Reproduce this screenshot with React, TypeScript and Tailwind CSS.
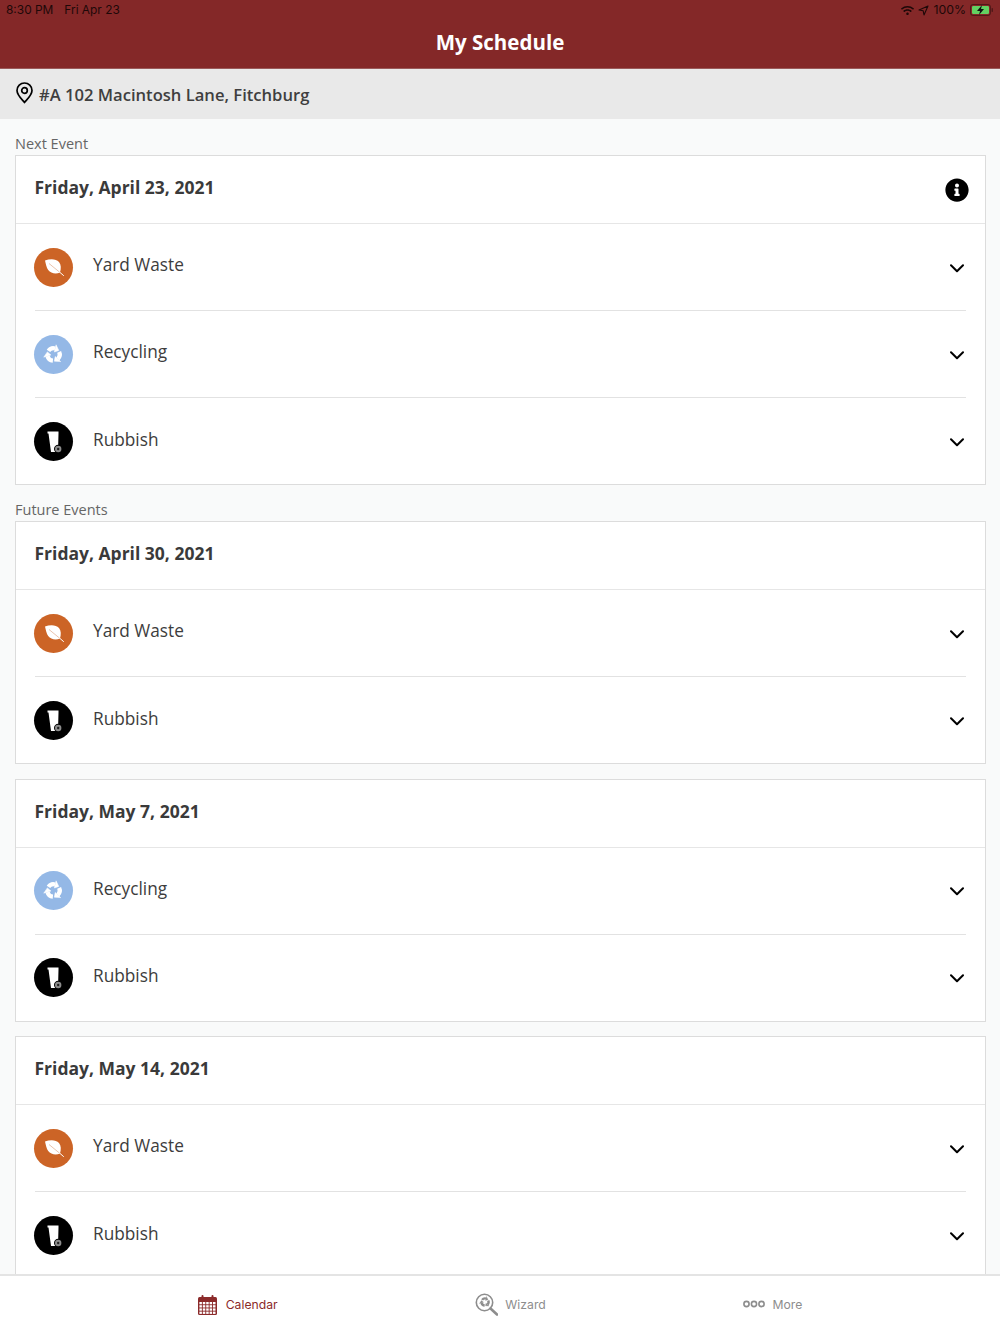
import React from "react";
import { FaInfoCircle, FaWifi } from "react-icons/fa";

const Chevron = () => (
  <svg width="14" height="9" viewBox="0 0 14 9" fill="none" className="shrink-0">
    <path d="M1 1.2L7 7.2L13 1.2" stroke="#000" strokeWidth="2" strokeLinecap="round" strokeLinejoin="round" />
  </svg>
);

const YardIcon = () => (
  <div className="w-[39px] h-[39px] rounded-full bg-[#cc6426] flex items-center justify-center shrink-0">
    <svg width="24" height="24" viewBox="0 0 24 24">
      <path d="M3 5.5C8 3.5 14 3.5 17 7C19.2 9.8 19.2 13.5 18 17.5C13.5 19.5 8.8 18.2 6.2 15C4.4 12.6 3.8 8.8 3 5.5Z" fill="#fff" />
      <path d="M7 8.5L18 17.5" stroke="#e3b498" strokeWidth="0.8" />
      <path d="M17.5 17L21.5 20.5" stroke="#fff" strokeWidth="1" strokeLinecap="round" />
    </svg>
  </div>
);

const RecycleGlyph = ({ color, size }: { color: string; size: number }) => (
  <svg width={size} height={size} viewBox="-11 -11 22 22" fill="none">
    {[0, 120, 240].map((a) => (
      <g key={a} transform={`rotate(${a})`}>
        <path d="M-5.3 -3.8A6.5 6.5 0 0 1 1.7 -6.3" stroke={color} strokeWidth="4.4" />
        <path d="M2.7 -10.2L0.9 -2.6L5.6 -4.2Z" fill={color} stroke={color} strokeWidth="0.5" strokeLinejoin="round" />
      </g>
    ))}
  </svg>
);

const RecycleIcon = () => (
  <div className="w-[39px] h-[39px] rounded-full bg-[#94b8e6] flex items-center justify-center shrink-0">
    <RecycleGlyph color="#fff" size={21} />
  </div>
);

const BinIcon = () => (
  <div className="w-[39px] h-[39px] rounded-full bg-black flex items-center justify-center shrink-0">
    <svg width="39" height="39" viewBox="0 0 39 39">
      <path d="M13.5 9.5H24.5V11.5L24 30H17L14.5 11.5L13.5 11.5Z" fill="#fff" />
      <circle cx="24.2" cy="27" r="4.2" fill="#000" />
      <circle cx="24.2" cy="27" r="3.2" fill="#8c8c8c" />
      <circle cx="24.2" cy="27" r="1.2" fill="#222" />
    </svg>
  </div>
);

const kinds: Record<string, { label: string; Icon: React.FC }> = {
  yard: { label: "Yard Waste", Icon: YardIcon },
  recycle: { label: "Recycling", Icon: RecycleIcon },
  rubbish: { label: "Rubbish", Icon: BinIcon },
};

function Row({ kind }: { kind: string }) {
  const { label, Icon } = kinds[kind];
  return (
    <div className="group h-[87px] last:h-[86px] mx-[19px] flex items-center border-b border-[#e2e2e2] last:border-b-0">
      <div className="-ml-[1px]">
        <Icon />
      </div>
      <span className="ml-[20px] flex-1 text-[17.25px] leading-[24px] text-[#3d3d3d] mb-[3.5px] group-last:mb-[2.5px]">{label}</span>
      <span className="w-[14px] mr-[2px] mt-[2px] flex justify-center">
        <Chevron />
      </span>
    </div>
  );
}

function Card({ date, items, info }: { date: string; items: string[]; info?: boolean }) {
  return (
    <div className="bg-white border border-[#dcdcdc]">
      <div className="h-[68px] border-b border-[#e6e6e6] pl-[18.5px] pr-[16px] flex items-center justify-between">
        <span className="text-[17.5px] leading-[24px] font-bold text-[#3a3a3a] mb-[5px]">{date}</span>
        {info && <FaInfoCircle size={24} color="#000" />}
      </div>
      {items.map((k, i) => (
        <Row key={i} kind={k} />
      ))}
    </div>
  );
}

const Label = ({ children }: { children: React.ReactNode }) => (
  <div className="h-[36px] pt-[15px] text-[14.5px] leading-[20px] text-[#666666]">{children}</div>
);

const CalendarIcon = () => (
  <svg width="19" height="20" viewBox="0 0 19 20" fill="none">
    <rect x="0" y="2" width="19" height="18" rx="1.5" fill="#8b2a2a" />
    <rect x="3.5" y="0" width="2" height="4" rx="1" fill="#8b2a2a" />
    <rect x="13.5" y="0" width="2" height="4" rx="1" fill="#8b2a2a" />
    <g fill="#fff">
      {[7, 10.2, 13.4, 16.6].map((y) =>
        [1.4, 4.8, 8.2, 11.6, 15].map((x) => <rect key={`${x}-${y}`} x={x} y={y} width="2.5" height="2.3" />)
      )}
    </g>
  </svg>
);

const WizardIcon = () => (
  <div className="relative w-[23px] h-[23px] -mt-[2px]">
    <svg width="23" height="23" viewBox="0 0 23 23" fill="none" className="absolute inset-0">
      <circle cx="9.5" cy="9.5" r="8.2" stroke="#8d8d8d" strokeWidth="1.6" />
      <path d="M15.5 15.5L22 21.5" stroke="#8d8d8d" strokeWidth="2.6" strokeLinecap="round" />
    </svg>
    <span className="absolute left-[3.5px] top-[3.5px]">
      <RecycleGlyph color="#8d8d8d" size={12} />
    </span>
  </div>
);

const MoreIcon = () => (
  <svg width="22" height="8" viewBox="0 0 22 8" fill="none" className="-mt-[1px]">
    <circle cx="3.5" cy="4" r="2.6" stroke="#8d8d8d" strokeWidth="1.6" />
    <circle cx="11" cy="4" r="2.6" stroke="#8d8d8d" strokeWidth="1.6" />
    <circle cx="18.5" cy="4" r="2.6" stroke="#8d8d8d" strokeWidth="1.6" />
  </svg>
);

export default function App() {
  return (
    <div className="h-[1334px] w-[1000px] overflow-hidden flex flex-col bg-[#f9fafa] font-['Open_Sans',sans-serif]">
      <header className="h-[69px] shrink-0 bg-[#842828] border-b border-[#9a5a5a] relative flex items-center justify-center">
        <div className="absolute top-0 left-0 right-0 h-[20px] pl-[6px] pr-[6px] flex items-center justify-between font-['Inter',sans-serif] text-[11.9px] text-[#1e0808]">
          <div className="flex gap-[11px]">
            <span>8:30 PM</span>
            <span>Fri Apr 23</span>
          </div>
          <div className="flex items-center gap-[4px] text-[12.3px]">
            <FaWifi size={13} color="#1e0808" />
            <svg width="11" height="11" viewBox="0 0 11 11" fill="none">
              <path d="M10 1L1 5L5.2 5.8L6 10Z" stroke="#1e0808" strokeWidth="1.1" strokeLinejoin="round" />
            </svg>
            <span>100%</span>
            <svg width="24" height="12" viewBox="0 0 24 12" fill="none">
              <rect x="0.5" y="0.5" width="20" height="11" rx="2.5" stroke="#1e0808" strokeOpacity="0.5" />
              <rect x="2" y="2" width="17" height="8" rx="1.2" fill="#63d162" />
              <rect x="21.5" y="4" width="1.5" height="4" rx="0.7" fill="#1e0808" fillOpacity="0.5" />
              <path d="M12 1L7 7H10L9 11L14 5H11Z" fill="#111" />
            </svg>
          </div>
        </div>
        <h1 className="text-[20.5px] font-bold text-white mt-[15px] leading-[28px]">My Schedule</h1>
      </header>

      <div className="h-[50px] shrink-0 bg-[#e9e9e9] pl-[16px] flex items-center gap-[6px]">
        <svg width="17" height="22" viewBox="0 0 17 22" fill="none" className="mb-[2px]">
          <path d="M8.5 20.5C6 17.5 1 13 1 8.5C1 4.4 4.4 1 8.5 1C12.6 1 16 4.4 16 8.5C16 13 11 17.5 8.5 20.5Z" stroke="#000" strokeWidth="1.7" strokeLinejoin="round" />
          <circle cx="8.5" cy="8.5" r="2.8" stroke="#000" strokeWidth="1.7" />
        </svg>
        <span className="text-[16.6px] leading-[24px] font-semibold text-[#3f3f3f] mt-[2px]">#A 102 Macintosh Lane, Fitchburg</span>
      </div>

      <main className="flex-1 min-h-0 overflow-hidden pl-[15px] pr-[14px]">
        <Label>Next Event</Label>
        <Card date="Friday, April 23, 2021" items={["yard", "recycle", "rubbish"]} info />
        <Label>Future Events</Label>
        <div className="flex flex-col gap-[14.5px]">
          <Card date="Friday, April 30, 2021" items={["yard", "rubbish"]} />
          <Card date="Friday, May 7, 2021" items={["recycle", "rubbish"]} />
          <Card date="Friday, May 14, 2021" items={["yard", "rubbish"]} />
        </div>
      </main>

      <nav className="h-[60px] shrink-0 bg-white border-t-2 border-[#e4e4e4] flex items-center justify-evenly font-['Inter',sans-serif] text-[12.2px]">
        <div className="flex items-center gap-[9px] text-[#8b2a2a]">
          <CalendarIcon />
          <span>Calendar</span>
        </div>
        <div className="flex items-center gap-[7px] text-[#8d8d8d]">
          <WizardIcon />
          <span>Wizard</span>
        </div>
        <div className="flex items-center gap-[7px] text-[#8d8d8d]">
          <MoreIcon />
          <span>More</span>
        </div>
      </nav>
    </div>
  );
}
